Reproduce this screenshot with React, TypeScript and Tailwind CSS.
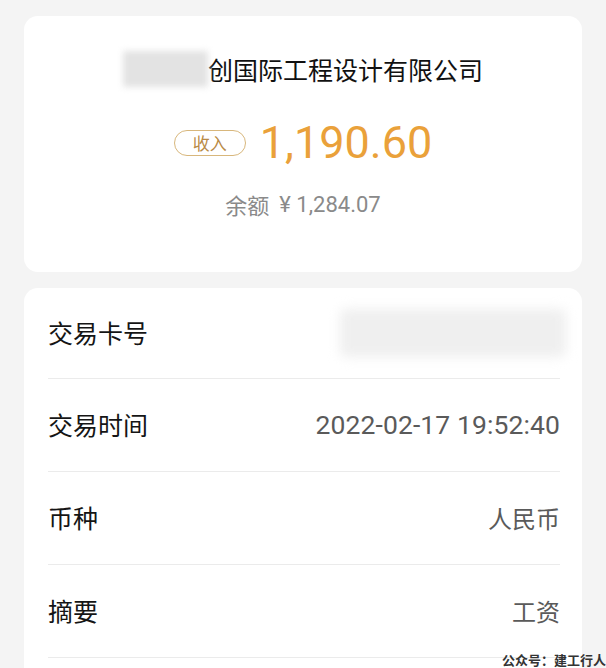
import React from "react";

const cjk = { fontFamily: '"Noto Sans CJK SC", "Noto Sans", sans-serif' };
const num = { fontFamily: 'Roboto, "Noto Sans CJK SC", sans-serif' };

function Row({ label, value, blur, first, isNum }: { label: string; value?: string; blur?: boolean; first?: boolean; isNum?: boolean }) {
  return (
    <div className={`flex items-center justify-between border-b border-[#ebebeb] ${first ? "h-[91px]" : "h-[93px]"}`}>
      <span className="text-[25px] text-[#151515]" style={cjk}>{label}</span>
      {blur ? (
        <div className="h-[48px] w-[226px] mr-[-6px] rounded-[6px] bg-[#efefef] blur-[6px]" />
      ) : isNum ? (
        <span className="text-[26.5px] tracking-[0.1px] text-[#5a5a5a]" style={num}>{value}</span>
      ) : (
        <span className="text-[24px] text-[#5a5a5a]" style={cjk}>{value}</span>
      )}
    </div>
  );
}

export default function App() {
  return (
    <div className="relative w-[606px] h-[668px] overflow-hidden bg-[#f4f4f4] px-[24px] pt-[16px]">
      <div className="h-[256px] rounded-[14px] bg-white flex flex-col items-center pt-[34px]">
        <div className="flex items-center h-[38px]">
          <div className="w-[85px] h-[36px] bg-[#e3e3e3] blur-[3px]" />
          <span className="text-[25px] text-[#111] leading-[38px]" style={cjk}>创国际工程设计有限公司</span>
        </div>
        <div className="flex items-center mt-[32px] h-[46px]">
          <div className="flex items-center justify-center w-[72px] h-[26px] rounded-full border border-[#d8b77c] text-[17px] text-[#b98a45]" style={cjk}>收入</div>
          <span className="ml-[14px] text-[45px] leading-[46px] text-[#eaa13a]" style={num}>1,190.60</span>
        </div>
        <div className="mt-[22px] flex items-center text-[22px] text-[#8a8a8a]" style={cjk}>
          <span>余额</span>
          <span className="ml-[10px]" style={num}>¥ 1,284.07</span>
        </div>
      </div>
      <div className="mt-[16px] rounded-t-[14px] bg-white pl-[24px] pr-[22px]">
        <Row label="交易卡号" blur first />
        <Row label="交易时间" value="2022-02-17 19:52:40" isNum />
        <Row label="币种" value="人民币" />
        <Row label="摘要" value="工资" />
        <div className="h-[20px]" />
      </div>
      <div className="absolute right-[0px] bottom-[1px] text-[13px] font-bold text-[#333] leading-[15px]" style={cjk}>公众号：建工行人</div>
    </div>
  );
}
